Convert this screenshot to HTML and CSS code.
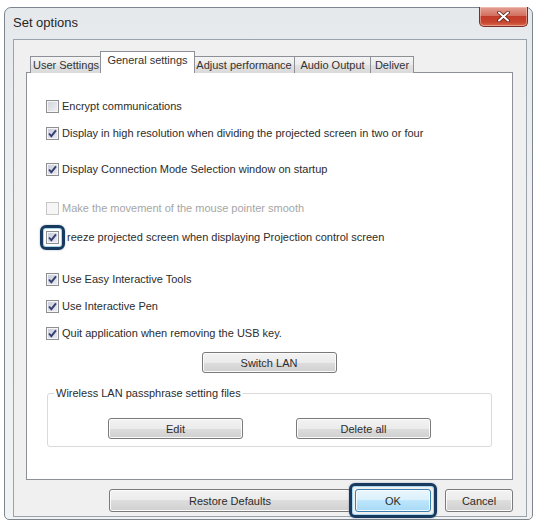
FILE: index.html
```html
<!DOCTYPE html>
<html lang="en">
<head>
    <meta charset="UTF-8">
    <title>Set options</title>
    <link rel="stylesheet" href="styles.css">
</head>
<body>
    <div class="window">
        <div class="titlebar">
            <span class="title">Set options</span>
            <button class="close" type="button">
                <svg width="13" height="11" viewBox="0 0 13 11">
                    <path d="M2 1.5 L11 9.5 M11 1.5 L2 9.5" stroke="#5a1d14" stroke-width="3.6" stroke-linecap="round"/>
                    <path d="M2 1.5 L11 9.5 M11 1.5 L2 9.5" stroke="#ffffff" stroke-width="2" stroke-linecap="round"/>
                </svg>
            </button>
        </div>
        <div class="client">
            <div class="tabs">
                <div class="tab tab-user">User Settings</div>
                <div class="tab tab-general active">General settings</div>
                <div class="tab tab-adjust">Adjust performance</div>
                <div class="tab tab-audio">Audio Output</div>
                <div class="tab tab-deliver">Deliver</div>
            </div>
            <div class="panel">
                <label class="option row-1"><span class="check"></span><span class="text">Encrypt communications</span></label>
                <label class="option row-2"><span class="check on"></span><span class="text">Display in high resolution when dividing the projected screen in two or four</span></label>
                <label class="option row-3"><span class="check on"></span><span class="text">Display Connection Mode Selection window on startup</span></label>
                <label class="option row-4 disabled"><span class="check"></span><span class="text">Make the movement of the mouse pointer smooth</span></label>
                <label class="option row-5">
                    <span class="marked"><span class="check on"></span><span class="mark"></span></span>
                    <span class="text text-after-mark">reeze projected screen when displaying Projection control screen</span>
                </label>
                <label class="option row-6"><span class="check on"></span><span class="text">Use Easy Interactive Tools</span></label>
                <label class="option row-7"><span class="check on"></span><span class="text">Use Interactive Pen</span></label>
                <label class="option row-8"><span class="check on"></span><span class="text">Quit application when removing the USB key.</span></label>

                <button class="btn btn-switch" type="button">Switch LAN</button>

                <div class="group">
                    <span class="group-title">Wireless LAN passphrase setting files</span>
                    <div class="group-buttons">
                        <button class="btn btn-wide" type="button">Edit</button>
                        <button class="btn btn-wide" type="button">Delete all</button>
                    </div>
                </div>
            </div>
            <div class="actions">
                <button class="btn btn-restore" type="button">Restore Defaults</button>
                <span class="marked">
                    <button class="btn btn-ok" type="button">OK</button>
                    <span class="mark"></span>
                </span>
                <button class="btn btn-cancel" type="button">Cancel</button>
            </div>
        </div>
    </div>
</body>
</html>
```

FILE: styles.css
```css
* {
    box-sizing: border-box;
}
body {
    margin: 0;
    background: #ffffff;
    font-family: "Liberation Sans", Arial, sans-serif;
    font-size: 11px;
    color: #2c2c2c;
}

/* window frame */
.window {
    margin: 7px 0 0 4px;
    width: 529px;
    height: 513px;
    border: 1px solid #7d868f;
    border-radius: 7px 7px 5px 5px;
    background: linear-gradient(#e6e9ec, #eef0f2 40%, #f1f2f3);
    padding: 0 5px 2px 8px;
    display: flex;
    flex-direction: column;
}
.titlebar {
    height: 31px;
    display: flex;
    justify-content: space-between;
    align-items: flex-start;
}
.title {
    margin-top: 7px;
    font-size: 13px;
    line-height: 15px;
    color: #262626;
}
.close {
    width: 49px;
    height: 20px;
    margin: -1px -1px 0 0;
    padding: 0;
    border: 1px solid #7a2e25;
    border-top: none;
    border-radius: 0 0 5px 5px;
    background: linear-gradient(#e3a195, #d3705f 45%, #c13b29 50%, #c8452f 80%, #d86a50);
    box-shadow: inset 0 0 0 1px rgba(255, 220, 210, 0.45);
    display: flex;
    align-items: center;
    justify-content: center;
}

/* client area */
.client {
    flex: 1;
    background: #f0f0f0;
    border: 1px solid #9aa2aa;
    padding: 11px 13px 0 12px;
    display: flex;
    flex-direction: column;
}

/* tab strip */
.tabs {
    display: flex;
    align-items: flex-end;
    height: 22px;
    padding-left: 4px;
    margin-bottom: -1px;
    position: relative;
    z-index: 1;
}
.tab {
    height: 17px;
    line-height: 16px;
    border: 1px solid #8d9097;
    border-bottom: none;
    margin-left: -1px;
    text-align: center;
    background: linear-gradient(#f4f4f4, #ebebeb 50%, #e2e2e2 50%, #dadada);
    color: #333333;
    white-space: nowrap;
}
.tab:first-child {
    margin-left: 0;
}
.tab.active {
    height: 22px;
    line-height: 17px;
    background: #ffffff;
    margin: 0 -1px 0 -2px;
    position: relative;
}
.tab-user { width: 72px; }
.tab-general { width: 95px; }
.tab-adjust { width: 102px; }
.tab-audio { width: 77px; }
.tab-deliver { width: 44px; }

/* tab page */
.panel {
    height: 408px;
    background: #ffffff;
    border: 1px solid #8d9097;
    padding: 25px 20px 0 19px;
    display: flex;
    flex-direction: column;
}
.option {
    display: flex;
    align-items: center;
    height: 16px;
    white-space: nowrap;
}
.row-2, .row-7, .row-8 { margin-top: 11px; }
.row-3 { margin-top: 20px; }
.row-4 { margin-top: 23px; }
.row-5 { margin-top: 13px; }
.row-6 { margin-top: 26px; }

.check {
    width: 13px;
    height: 13px;
    flex: none;
    border: 1px solid #8e8f90;
    background: linear-gradient(135deg, #d0d3dc, #f2f2f4);
    box-shadow: inset 0 0 0 1px #f6f6f6;
}
.check.on {
    background: url("data:image/svg+xml,%3Csvg xmlns='http://www.w3.org/2000/svg' width='11' height='11'%3E%3Cpath d='M2 5.5 L4.3 8.2 L9 2.3' fill='none' stroke='%2334406c' stroke-width='1.9'/%3E%3C/svg%3E") center no-repeat,
                linear-gradient(135deg, #c9cbdc, #ebebf3);
}
.text {
    margin-left: 3px;
}
.disabled .text {
    color: #a6a6a6;
}
.disabled .check {
    border-color: #c7c7c7;
    background: #f6f6f6;
}

/* callout frames drawn over a control */
.marked {
    position: relative;
    display: inline-flex;
}
.mark {
    position: absolute;
    top: -6px;
    left: -6px;
    right: -6px;
    bottom: -6px;
    border: 3px solid #173a5e;
    border-radius: 6px;
    box-shadow: inset 0 0 0 1px #a9d8ee, 0 0 2px rgba(23, 58, 94, 0.4);
    pointer-events: none;
}
.text-after-mark {
    margin-left: 8px;
}

/* push buttons */
.btn {
    height: 23px;
    padding: 0;
    border: 1px solid #7a7a7a;
    border-radius: 3px;
    background: linear-gradient(#f3f3f3, #ebebeb 50%, #dddddd 50%, #d0d0d0);
    box-shadow: inset 0 0 0 1px #fbfbfb;
    font-family: inherit;
    font-size: 11px;
    color: #2c2c2c;
}
.btn-switch {
    width: 135px;
    height: 21px;
    margin-top: 11px;
    align-self: center;
}
.btn-wide {
    width: 135px;
    height: 21px;
}

/* group box */
.group {
    margin: 20px 0 0 1px;
    height: 54px;
    border: 1px solid #dadada;
    border-radius: 3px;
}
.group-title {
    display: inline-block;
    margin: -7px 0 0 6px;
    padding: 0 2px;
    line-height: 13px;
    background: #ffffff;
    vertical-align: top;
}
.group-buttons {
    display: flex;
    justify-content: center;
    gap: 53px;
    margin-top: 12px;
}

/* dialog buttons */
.actions {
    display: flex;
    justify-content: flex-end;
    margin-top: 9px;
}
.btn-restore {
    width: 242px;
    margin-right: 4px;
}
.btn-ok {
    width: 76px;
    border-color: #3c7fb1;
    background: linear-gradient(#eaf6fd, #d9f0fc 50%, #bee6fd 50%, #a7d9f5);
    box-shadow: inset 0 0 0 1px #f4fbff;
}
.btn-cancel {
    width: 68px;
    margin-left: 14px;
}
```
